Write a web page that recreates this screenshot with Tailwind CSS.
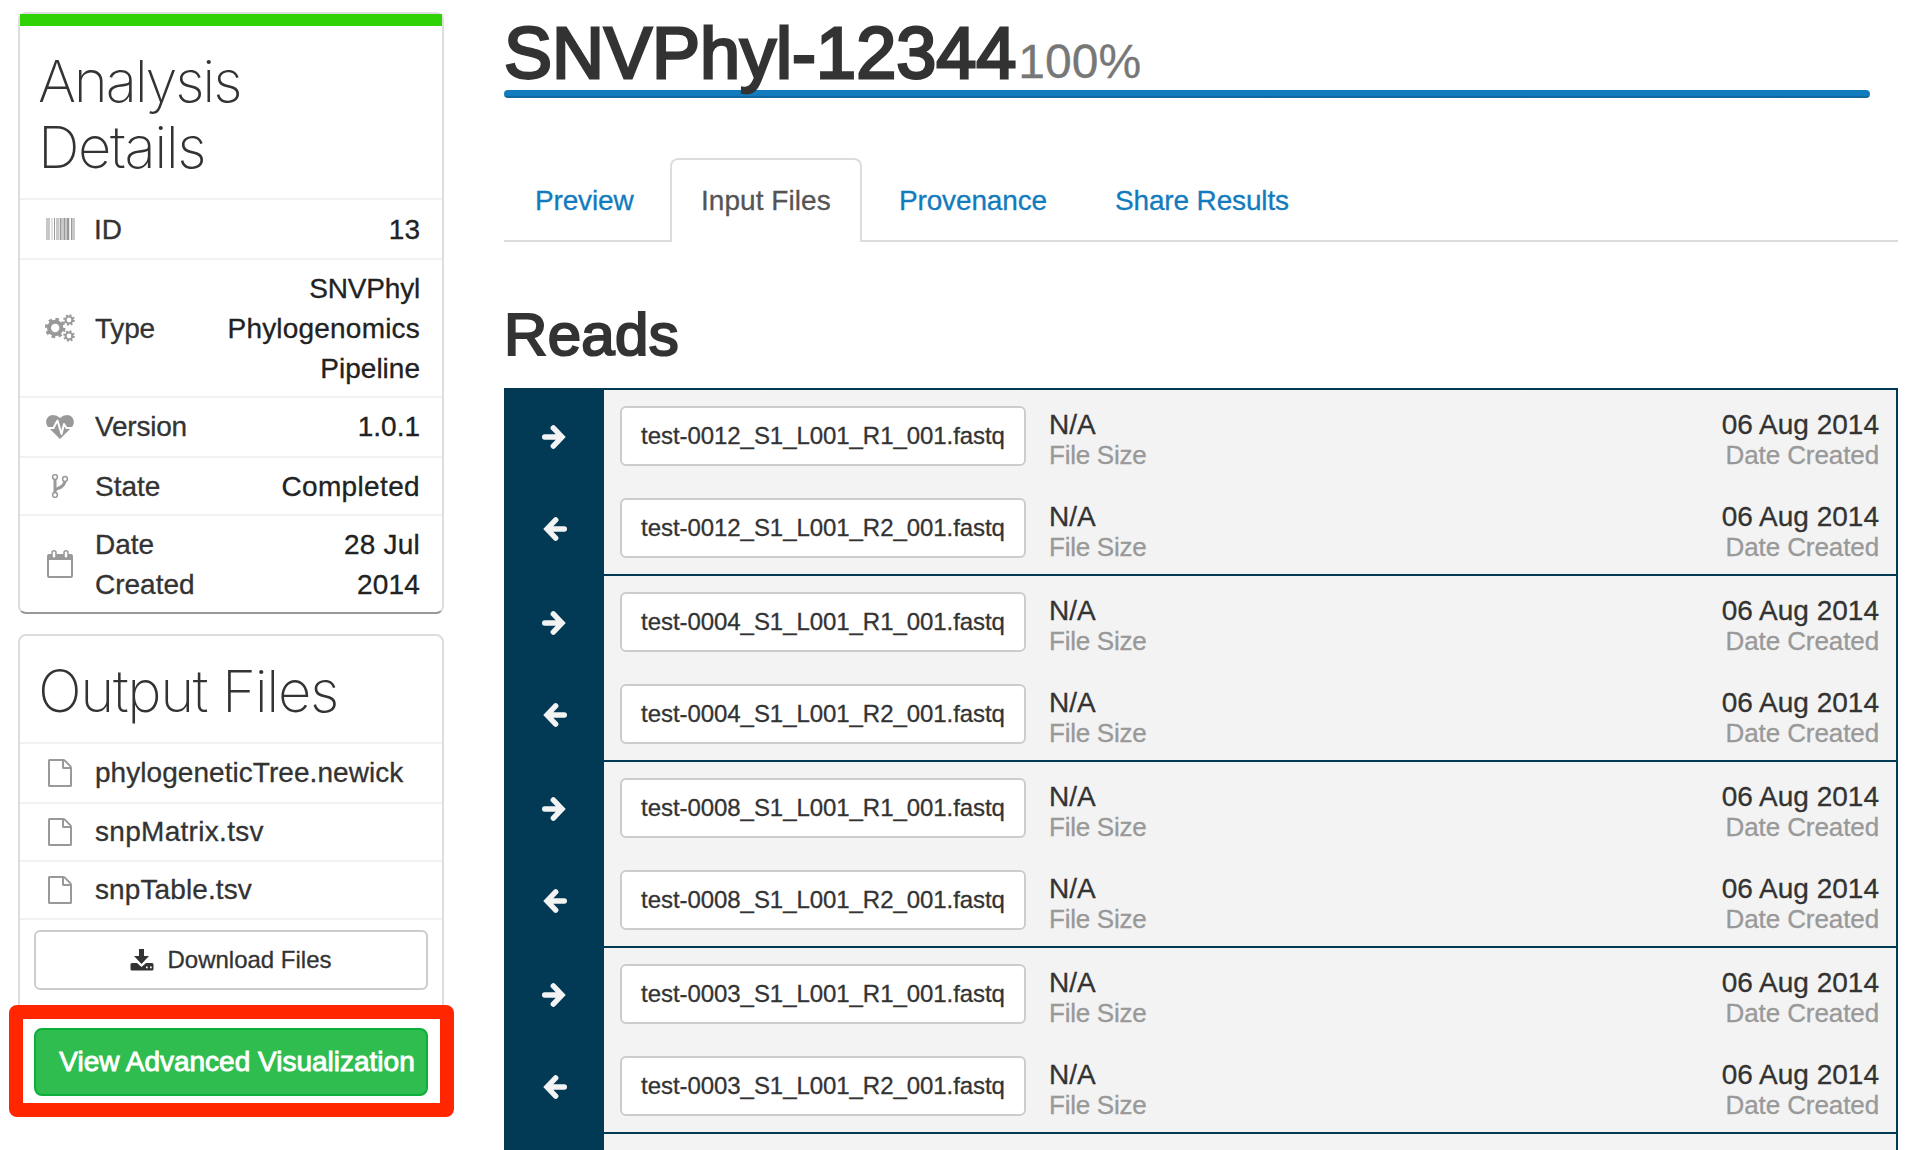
<!DOCTYPE html>
<html lang="en">
<head>
<meta charset="utf-8">
<title>SNVPhyl-12344</title>
<script src="https://cdn.jsdelivr.net/npm/@tailwindcss/browser@4"></script>
</head>
<body class="h-[1150px] w-[1922px] overflow-hidden bg-white font-['Liberation_Sans',sans-serif] text-[28px] leading-10 text-[#333] [-webkit-text-stroke:0.300px]">
<svg class="hidden">
  <symbol id="file" viewBox="0 0 24 28"><path fill="#999" fill-rule="evenodd" d="M1.5 0H15.5Q16.500 .1 17.500 1L23 6.500Q24 7.600 24 9V26.500Q24 28 22.500 28H1.500Q0 28 0 26.500V1.500Q0 0 1.500 0ZM2 2V26H22V10H15.500Q14 10 14 8.500V2ZM16 2.200V8H21.800Q21.600 7.700 21.300 7.400L16.600 2.700Q16.300 2.400 16 2.200Z"/></symbol>
  <symbol id="arrow" viewBox="0 0 24 24"><path fill="none" stroke="#f3f3f3" stroke-width="5.400" stroke-linecap="round" d="M2.700 12H18M11.300 2.900L20 12L11.300 21.100"/></symbol>
</svg>
<div class="flex">
  <aside class="flex w-[444px] shrink-0 flex-col pl-[18px] pt-3">
    <section class="h-[602px] rounded-lg border-2 border-[#ddd] border-b-[#999]">
      <div class="h-3 bg-[#2fd305]"></div>
      <h2 class="h-[174px] border-b-2 border-[#f2f2f2] pl-[18px] pt-[22px] font-['Inter'] text-[58px] font-extralight leading-[66px] [-webkit-text-stroke:0]"><span class="tracking-[-2.200px]">Analysis</span><br><span class="tracking-[-1.500px]">Details</span></h2>
      <div class="flex h-[60px] items-center border-b-2 border-[#f2f2f2] pl-[26px] pr-[22px]">
        <svg class="mr-[19px] h-[22px] w-[29px]" viewBox="0 0 29 22" shape-rendering="crispEdges"><path fill="#c8c8c8" d="M0 0h4v22H0zM10 0h3v22h-3zM15 0h3v22h-3zM19 0h2v22h-2zM26 0h3v22h-3z"/><path fill="#e2e2e2" d="M5 0h2v22H5zM13 0h1v22h-1zM23 0h1v22h-1z"/><path fill="#999" d="M8 0h1v22H8zM14 0h1v22h-1zM18 0h1v22h-1zM21 0h2v22h-2zM25 0h1v22h-1z"/></svg>
        <span class="grow pt-[2px]">ID</span><span class="pt-[2px] text-[#222]">13</span>
      </div>
      <div class="flex h-[138px] items-center border-b-2 border-[#f2f2f2] pl-[25px] pr-[22px]">
        <svg class="mr-[20px] h-[28px] w-[30px]" viewBox="0 0 30 28"><g fill="none" stroke="#999"><circle cx="10.200" cy="14" r="6.200" stroke-width="4"/><circle cx="10.200" cy="14" r="8.700" stroke-width="3.200" stroke-dasharray="3.416"/><circle cx="24" cy="6" r="3.400" stroke-width="2"/><circle cx="24" cy="6" r="4.800" stroke-width="2" stroke-dasharray="1.885"/><circle cx="24" cy="22" r="3.400" stroke-width="2"/><circle cx="24" cy="22" r="4.800" stroke-width="2" stroke-dasharray="1.885"/></g></svg>
        <span class="grow pt-[2px] tracking-[-0.200px]">Type</span><span class="pt-[2px] text-right text-[#222]"><span class="tracking-[-0.200px]">SNVPhyl</span><br><span class="tracking-[0.200px]">Phylogenomics</span><br>Pipeline</span>
      </div>
      <div class="flex h-[60px] items-center border-b-2 border-[#f2f2f2] pl-[25px] pr-[22px]">
        <svg class="mr-[20px] h-[24px] w-[30px]" viewBox="0 0 30 24"><path fill="#999" d="M15 24L3 12C-1 7 2 0 8 0Q12 0 15 3Q18 0 22 0C28 0 31 7 27 12Z"/><path fill="none" stroke="#fff" stroke-width="2" stroke-linejoin="round" d="M1 13H8.500L10.500 9L12.500 5.500L16.500 19L19 9L21.500 13H29"/></svg>
        <span class="grow tracking-[-0.200px]">Version</span><span class="text-[#222]">1.0.1</span>
      </div>
      <div class="flex h-[58px] items-center border-b-2 border-[#f2f2f2] pl-[25px] pr-[22px]">
        <svg class="mr-[20px] h-[24px] w-[30px]" viewBox="0 0 30 24"><g fill="none" stroke="#999"><path stroke-width="3" d="M10 5V19M10 16.500C11 14 19 14.500 19.800 7.500"/><g fill="#fff" stroke-width="1.500"><circle cx="10" cy="3" r="2.400"/><circle cx="10" cy="21" r="2.400"/><circle cx="20" cy="5" r="2.400"/></g></g></svg>
        <span class="grow pt-[2px]">State</span><span class="pt-[2px] tracking-[0.350px] text-[#222]">Completed</span>
      </div>
      <div class="flex h-[96px] items-center pl-[25px] pr-[22px]">
        <svg class="mr-[20px] h-[28px] w-[30px]" viewBox="0 0 30 28"><path fill="#999" fill-rule="evenodd" d="M4 4H26Q28 4 28 6V26Q28 28 26 28H4Q2 28 2 26V6Q2 4 4 4ZM4 10V26H26V10Z"/><g fill="#fff" stroke="#999" stroke-width="1.500"><rect x="7" y=".8" width="4" height="7.400" rx="2"/><rect x="19" y=".8" width="4" height="7.400" rx="2"/></g></svg>
        <span class="grow pt-[2px]">Date<br>Created</span><span class="pt-[2px] text-right tracking-[0.200px] text-[#222]">28 Jul<br>2014</span>
      </div>
    </section>
    <section class="mt-5 flex h-[476px] flex-col rounded-lg border-2 border-[#ddd]">
      <h2 class="h-[108px] shrink-0 border-b-2 border-[#f2f2f2] pl-[18px] pt-[22px] font-['Inter'] text-[58px] font-extralight leading-[66px] tracking-[-1.350px] [-webkit-text-stroke:0]">Output Files</h2>
      <div class="flex h-[60px] shrink-0 items-center border-b-2 border-[#f2f2f2] pl-[28px] tracking-[0.050px]"><svg class="mr-[23px] h-7 w-6"><use href="#file"/></svg>phylogeneticTree.newick</div>
      <div class="flex h-[58px] shrink-0 items-center border-b-2 border-[#f2f2f2] pl-[28px] tracking-[0.300px]"><svg class="mr-[23px] h-7 w-6"><use href="#file"/></svg>snpMatrix.tsv</div>
      <div class="flex h-[58px] shrink-0 items-center border-b-2 border-[#f2f2f2] pl-[28px] tracking-[0.100px]"><svg class="mr-[23px] h-7 w-6"><use href="#file"/></svg>snpTable.tsv</div>
      <button class="mx-[14px] mt-[10px] flex h-[60px] shrink-0 items-center justify-center rounded-md border-2 border-[#ccc] bg-white text-[24px]"><svg class="mr-[13px] h-[22px] w-[24px]" viewBox="0 0 24 22"><path fill="#333" fill-rule="evenodd" d="M9 0h5v7h5L11.500 15L4 7H9ZM2 14H7L11.500 18L16 14H22Q23.500 14 23.500 15.500V20Q23.500 21.500 22 21.500H2Q.5 21.500 .5 20V15.500Q.5 14 2 14ZM16 17.500v1.700h1.700v-1.700ZM20 17.500v1.700h1.700v-1.700Z"/></svg>Download Files</button>
      <div class="-ml-[11px] mt-[15px] flex h-[112px] w-[445px] shrink-0 rounded-lg border-[14px] border-[#ff2600] bg-white pl-[11px] pt-[9px]">
        <button class="flex h-[68px] w-[394px] shrink-0 items-center justify-center whitespace-nowrap rounded-lg border-2 border-[#0cae3c] bg-[#30bd50] pl-3 text-white [-webkit-text-stroke:0.900px_white]">View Advanced Visualization</button>
      </div>
    </section>
  </aside>
  <main class="ml-[60px] w-[1394px]">
    <h1 class="flex h-[90px] items-baseline whitespace-nowrap pt-[13px] text-[72px] leading-[80px]"><span class="relative z-10 [-webkit-text-stroke:2.800px_#333]">SNVPhyl-12344</span><span class="ml-[2px] text-[48px] text-[#777]">100%</span></h1>
    <div class="h-2 w-[1366px] rounded bg-linear-to-b from-[#127bbe] from-75% to-[#1067a0] to-75%"></div>
    <nav class="mt-[60px] flex h-[84px] border-b-2 border-[#ddd] tracking-[-0.150px] text-[#127bbe]">
      <a class="w-[166px] pl-[31px] pt-[23px]">Preview</a>
      <a class="h-[84px] w-[192px] rounded-t-lg border-2 border-b-0 border-[#ddd] bg-white pl-[29px] pt-[21px] tracking-[0.050px] text-[#555]">Input Files</a>
      <a class="w-[216px] pl-[37px] pt-[23px]">Provenance</a>
      <a class="pl-[37px] pt-[23px]">Share Results</a>
    </nav>
    <h2 class="h-[146px] pt-[58px] text-[60px] leading-[70px] tracking-[0.300px] [-webkit-text-stroke:2.200px_#333]">Reads</h2>
    <div id="reads" class="border-2 border-b-0 border-[#023a55] bg-[#f3f3f3]"></div>
  </main>
</div>
<script>
const row = (id, n) => `<div class="flex h-[92px] pt-4">
  <div class="flex h-[60px] w-[98px] shrink-0 items-center justify-center pt-[2px] ${n === 1 ? 'pr-[2px]' : ''}"><svg class="size-6 ${n === 2 ? 'rotate-180' : ''}"><use href="#arrow"/></svg></div>
  <button class="ml-4 h-[60px] w-[406px] shrink-0 whitespace-nowrap rounded-md border-2 border-[#ccc] bg-white text-[24px] tracking-[-0.060px]">test-${id}_S1_L001_R${n}_001.fastq</button>
  <div class="ml-[23px] grow leading-[31px] pt-[3px]">N/A<div class="text-[26px] tracking-[-0.250px] text-[#999]">File Size</div></div>
  <div class="pr-[17px] pt-[3px] text-right leading-[31px]">06 Aug 2014<div class="text-[26px] tracking-[-0.100px] text-[#999]">Date Created</div></div>
</div>`;
const group = 'border-[#023a55] bg-linear-to-r from-[#023a55] from-[98px] to-[#f3f3f3] to-[98px]';
document.getElementById('reads').innerHTML = ['0012', '0004', '0008', '0003'].map(id =>
  `<div class="h-[186px] border-b-2 ${group}">${row(id, 1)}${row(id, 2)}</div>`).join('') + `<div class="h-4 ${group}"></div>`;
</script>
</body>
</html>
